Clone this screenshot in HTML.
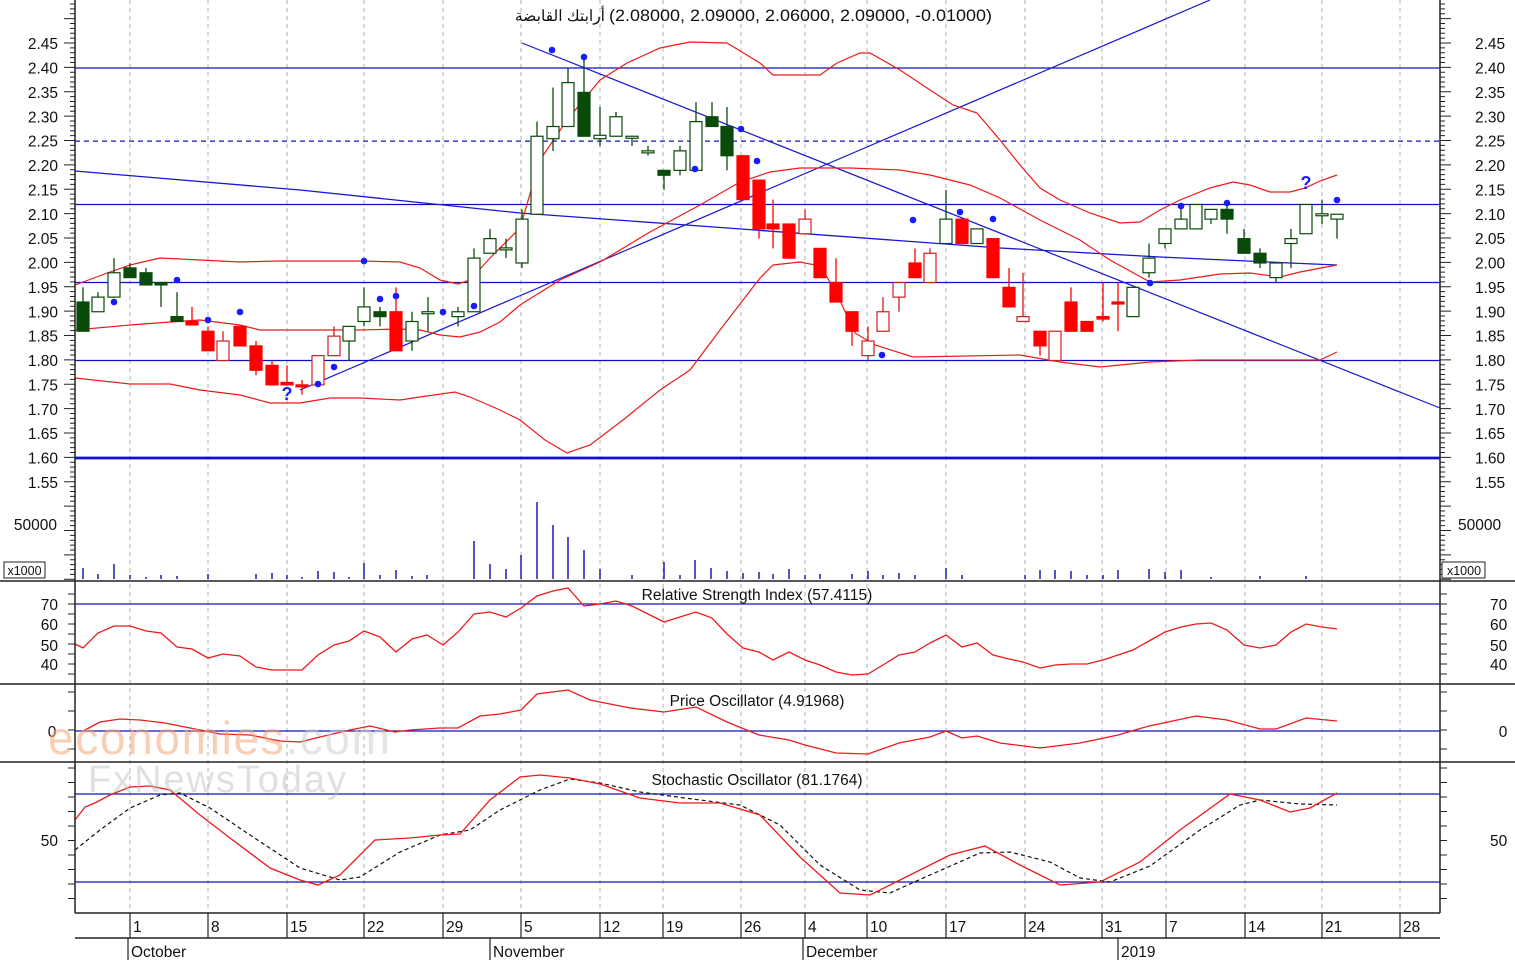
<!DOCTYPE html>
<html><head><meta charset="utf-8">
<style>
html,body{margin:0;padding:0;background:#fff;}
svg{display:block;font-family:"Liberation Sans","Noto Sans CJK SC",sans-serif;}
</style></head>
<body>
<svg id="c" xmlns="http://www.w3.org/2000/svg" width="1515" height="960" viewBox="0 0 1515 960">
<rect width="1515" height="960" fill="#fff"/>
<g id="g"></g>
<text x="605" y="21" text-anchor="end" font-size="15.5" fill="#111">أرابتك القابضة</text>
<text x="609" y="21" font-size="16.5" fill="#111" textLength="383" lengthAdjust="spacingAndGlyphs">(2.08000, 2.09000, 2.06000, 2.09000, -0.01000)</text>
<text x="757" y="600" text-anchor="middle" font-size="15.5" fill="#111">Relative Strength Index (57.4115)</text>
<text x="757" y="706" text-anchor="middle" font-size="15.5" fill="#111">Price Oscillator (4.91968)</text>
<text x="757" y="785" text-anchor="middle" font-size="15.5" fill="#111">Stochastic Oscillator (81.1764)</text>
<text x="48" y="754" font-size="46" fill="#f6a77a" opacity="0.55" textLength="342">economies<tspan fill="#cfcfcf">.com</tspan></text>
<text x="88" y="792" font-size="38" fill="#bbb" opacity="0.45" textLength="258">FxNewsToday</text>
</svg>
<script>
var g=document.getElementById('g'),s='';
function Y(p){return 68+(2.40-p)*487.5;}
function L(x1,y1,x2,y2,c,w,d){s+='<line x1="'+x1+'" y1="'+y1+'" x2="'+x2+'" y2="'+y2+'" stroke="'+c+'" stroke-width="'+(w||1)+'"'+(d?' stroke-dasharray="'+d+'"':'')+'/>';}
function P(pts,c,w,d){s+='<polyline fill="none" points="'+pts.map(function(p){return p.join(',')}).join(' ')+'" stroke="'+c+'" stroke-width="'+(w||1.3)+'"'+(d?' stroke-dasharray="'+d+'"':'')+'/>';}
function T(x,y,t,a,sz){s+='<text x="'+x+'" y="'+y+'" font-size="'+(sz||15.5)+'" fill="#111"'+(a?' text-anchor="'+a+'"':'')+'>'+t+'</text>';}
var gx=[130,208,287,364,443,521,600,663,741,805,867,946,1025,1102,1166,1245,1322,1400];
gx.forEach(function(x){L(x,0,x,913,'#b0b0b0',1,'4,4');});
[2.40,2.12,1.96,1.80].forEach(function(p){L(75,Y(p),1440,Y(p),'#1010c0',1.3);});
L(75,Y(2.25),1440,Y(2.25),'#1010c0',1.3,'5,4');
L(75,458,1440,458,'#1010d0',2.8);
P([[75,171],[300,190],[520,213],[700,226],[1000,248],[1160,257],[1290,263],[1337,265]],'#1818d0',1.3);
L(300,390,1210,0,'#1818d0',1.2);
L(522,43,1440,408,'#1818d0',1.2);
P([[75,285],[110,272],[130,265],[160,258],[200,260],[240,262],[280,261],[320,261],[360,261],[400,262],[420,268],[440,280],[458,284],[470,280],[490,258],[520,228],[540,160],[567,120],[600,80],[627,63],[660,48],[690,42],[727,43],[760,63],[773,75],[820,75],[837,63],[860,53],[870,53],[900,70],[930,90],[953,105],[977,113],[1000,140],[1020,165],[1040,188],[1060,200],[1090,213],[1120,223],[1140,222],[1160,210],[1180,200],[1210,188],[1233,182],[1250,185],[1270,192],[1290,192],[1305,188],[1320,181],[1337,175]],'#ee1a1a',1.2);
P([[75,330],[130,325],[170,322],[200,320],[240,325],[260,330],[320,330],[360,330],[400,329],[420,330],[440,335],[460,337],[480,332],[500,322],[520,305],[560,280],[600,262],[650,232],[700,205],[740,182],[770,172],[800,168],[850,168],[900,170],[930,175],[970,185],[1000,198],[1040,220],[1080,240],[1110,260],[1150,282],[1180,280],[1220,274],[1250,273],[1280,277],[1300,272],[1337,265]],'#ee1a1a',1.2);
P([[75,378],[130,384],[170,384],[200,390],[240,395],[270,403],[300,403],[330,398],[360,398],[400,400],[420,397],[455,392],[470,397],[500,410],[520,420],[545,440],[567,453],[590,445],[623,420],[660,390],[690,370],[720,330],[760,278],[773,265],[800,262],[820,266],[835,290],[855,333],[875,345],[913,357],[1020,355],[1060,362],[1100,367],[1150,362],[1200,360],[1320,360],[1337,352]],'#ee1a1a',1.2);
var C=[[83,1.92,1.86,1.95,1.86,'G'],[98,1.90,1.93,1.94,1.90,'g'],[114,1.93,1.98,2.01,1.93,'g'],[130,1.99,1.97,2.00,1.97,'G'],[146,1.98,1.955,1.99,1.955,'G'],[161,1.96,1.955,1.96,1.91,'G'],[177,1.89,1.88,1.94,1.88,'G'],[192,1.88,1.873,1.91,1.873,'r'],[208,1.86,1.82,1.87,1.82,'r'],[223,1.80,1.84,1.86,1.80,'R'],[240,1.87,1.83,1.87,1.83,'r'],[256,1.83,1.78,1.84,1.77,'r'],[272,1.79,1.75,1.80,1.75,'r'],[287,1.755,1.75,1.79,1.75,'r'],[302,1.75,1.749,1.76,1.73,'r'],[318,1.75,1.81,1.81,1.75,'R'],[334,1.81,1.85,1.87,1.81,'R'],[349,1.84,1.87,1.87,1.80,'g'],[364,1.88,1.91,1.95,1.87,'g'],[380,1.90,1.89,1.91,1.87,'G'],[396,1.90,1.82,1.95,1.82,'r'],[412,1.84,1.88,1.90,1.82,'g'],[428,1.90,1.899,1.93,1.86,'g'],[458,1.89,1.90,1.91,1.87,'g'],[474,1.90,2.01,2.03,1.90,'g'],[490,2.02,2.05,2.07,2.02,'g'],[506,2.03,2.031,2.05,2.01,'g'],[522,2.00,2.09,2.11,1.99,'g'],[537,2.10,2.26,2.29,2.10,'g'],[553,2.255,2.28,2.36,2.23,'g'],[568,2.28,2.37,2.40,2.28,'g'],[584,2.35,2.26,2.42,2.26,'G'],[600,2.255,2.262,2.32,2.24,'g'],[616,2.26,2.30,2.31,2.26,'g'],[632,2.26,2.259,2.26,2.24,'g'],[648,2.23,2.229,2.24,2.22,'g'],[664,2.19,2.18,2.19,2.15,'G'],[680,2.19,2.23,2.24,2.18,'g'],[696,2.19,2.29,2.33,2.19,'g'],[712,2.30,2.28,2.33,2.28,'G'],[727,2.28,2.22,2.32,2.19,'G'],[743,2.22,2.13,2.22,2.13,'r'],[759,2.17,2.07,2.17,2.05,'r'],[773,2.08,2.07,2.13,2.03,'r'],[789,2.08,2.01,2.08,2.01,'r'],[805,2.06,2.09,2.11,2.06,'R'],[820,2.03,1.97,2.03,1.97,'r'],[836,1.96,1.92,2.01,1.92,'r'],[852,1.90,1.86,1.90,1.83,'r'],[868,1.81,1.84,1.87,1.80,'R'],[883,1.86,1.90,1.93,1.86,'R'],[899,1.93,1.96,1.96,1.90,'R'],[915,2.00,1.97,2.03,1.97,'r'],[930,1.96,2.02,2.03,1.96,'R'],[946,2.04,2.09,2.15,2.04,'g'],[962,2.09,2.04,2.09,2.04,'r'],[977,2.04,2.07,2.07,2.04,'g'],[993,2.05,1.97,2.05,1.97,'r'],[1009,1.95,1.91,1.99,1.91,'r'],[1023,1.88,1.89,1.98,1.88,'R'],[1040,1.86,1.83,1.86,1.81,'r'],[1055,1.80,1.86,1.86,1.80,'R'],[1071,1.92,1.86,1.95,1.86,'r'],[1087,1.88,1.86,1.88,1.86,'r'],[1103,1.89,1.885,1.96,1.88,'r'],[1118,1.92,1.919,1.96,1.86,'r'],[1133,1.89,1.95,1.95,1.89,'g'],[1149,1.98,2.01,2.04,1.97,'g'],[1165,2.04,2.07,2.07,2.03,'g'],[1181,2.07,2.09,2.12,2.07,'g'],[1196,2.07,2.12,2.12,2.07,'g'],[1211,2.09,2.11,2.11,2.08,'g'],[1227,2.11,2.09,2.12,2.06,'G'],[1244,2.05,2.02,2.07,2.02,'G'],[1260,2.02,2.00,2.03,1.99,'G'],[1276,1.97,2.00,2.00,1.96,'g'],[1291,2.04,2.05,2.07,1.99,'g'],[1306,2.06,2.12,2.12,2.06,'g'],[1322,2.10,2.101,2.13,2.08,'g'],[1337,2.09,2.10,2.10,2.05,'g']];
C.forEach(function(c){var x=c[0],t=Y(Math.max(c[1],c[2])),b=Y(Math.min(c[1],c[2])),h=Y(c[3]),l=Y(c[4]);
var red=(c[5]=='r'||c[5]=='R'),sc=c[5]=='R'?'#cc2020':(red?'#ff0000':'#0a4a0a');
L(x,h,x,l,sc,1.3);
var fill=(c[5]=='g'||c[5]=='R')?'#fff':(c[5]=='G'?'#0a4a0a':'#ff0000');
var hh=Math.max(b-t,2);
s+='<rect x="'+(x-6)+'" y="'+t+'" width="12" height="'+hh+'" fill="'+fill+'" stroke="'+sc+'" stroke-width="1.2"/>';});
[[114,302],[177,280],[208,320],[240,312],[318,384],[334,367],[364,261],[380,299],[396,296],[443,312],[474,306],[552,50],[584,57],[695,169],[741,129],[757,161],[882,355],[913,220],[960,212],[993,219],[1150,283],[1181,206],[1227,203],[1337,200]].forEach(function(d){s+='<circle cx="'+d[0]+'" cy="'+d[1]+'" r="3.3" fill="#1a1aff"/>';});
s+='<text x="287" y="400" font-size="18" font-weight="bold" fill="#1a1aff" text-anchor="middle">?</text>';
s+='<text x="1306" y="189" font-size="18" font-weight="bold" fill="#1a1aff" text-anchor="middle">?</text>';
var V=[[83,568],[98,574],[114,564],[130,575],[146,577],[161,575],[177,576],[208,574],[256,574],[272,573],[287,575],[302,577],[318,571],[334,572],[349,577],[364,563],[380,575],[396,570],[412,576],[427,575],[474,541],[490,564],[506,569],[521,555],[537,502],[553,525],[568,537],[584,550],[600,569],[632,575],[664,562],[680,575],[695,560],[711,568],[727,571],[743,573],[759,572],[773,574],[789,569],[805,575],[820,574],[852,574],[868,571],[883,575],[899,573],[915,575],[946,568],[962,575],[1025,575],[1040,570],[1055,570],[1071,571],[1087,575],[1103,575],[1118,570],[1149,569],[1165,572],[1181,570],[1211,577],[1260,576],[1306,576]];
V.forEach(function(v){L(v[0],v[1],v[0],579,'#1a1ab0',1.5);});
L(75,604,1440,604,'#1010c0',1.3);
P([[75,644],[83,648],[98,633],[114,626],[130,626],[146,631],[161,633],[177,647],[192,649],[208,658],[223,654],[240,656],[256,667],[272,670],[302,670],[318,655],[334,645],[349,641],[364,631],[380,637],[396,652],[412,639],[427,635],[443,645],[458,632],[474,614],[490,612],[506,617],[521,608],[537,596],[553,591],[568,588],[584,606],[600,604],[616,601],[632,606],[648,614],[664,622],[680,617],[696,612],[712,618],[727,634],[743,648],[759,652],[773,660],[789,652],[805,660],[820,665],[836,672],[852,675],[868,674],[883,665],[899,655],[915,652],[930,643],[946,635],[962,647],[977,643],[993,655],[1009,659],[1023,662],[1040,668],[1055,665],[1071,664],[1087,664],[1103,660],[1118,655],[1133,650],[1149,641],[1165,632],[1181,627],[1196,624],[1211,623],[1227,630],[1244,645],[1260,648],[1276,645],[1291,632],[1306,624],[1322,627],[1337,629]],'#ee1a1a',1.3);
L(75,731,1440,731,'#1010c0',1.3);
P([[83,731],[100,722],[120,719],[140,720],[165,723],[195,729],[220,734],[250,735],[280,741],[300,742],[320,737],[350,730],[370,726],[395,732],[410,730],[440,728],[458,728],[480,716],[500,714],[521,710],[537,694],[568,690],[590,700],[630,708],[664,712],[696,707],[727,722],[759,735],[789,740],[805,745],[836,753],[868,754],[899,743],[930,737],[946,731],[962,738],[977,736],[1000,743],[1040,748],[1080,743],[1118,735],[1149,726],[1196,716],[1227,720],[1260,729],[1276,729],[1306,718],[1337,721]],'#ee1a1a',1.3);
L(75,794,1440,794,'#1010c0',1.3);L(75,882,1440,882,'#1010c0',1.3);
P([[75,850],[100,830],[130,808],[160,795],[180,793],[210,808],[250,835],[300,868],[340,880],[360,877],[400,852],[440,835],[470,830],[500,810],[540,790],[570,779],[600,783],[640,792],[700,800],[740,805],[780,825],[820,865],[860,890],[890,893],[930,875],[980,853],[1010,852],[1050,862],[1080,878],[1110,882],[1150,866],[1200,830],[1240,805],[1260,800],[1300,804],[1337,805]],'#111',1.2,'4,3');
P([[75,820],[85,807],[95,803],[110,795],[130,787],[150,786],[170,790],[200,815],[230,838],[270,868],[300,880],[318,885],[340,875],[375,840],[410,838],[440,835],[460,834],[490,800],[520,777],[540,775],[570,778],[600,784],[640,798],[680,803],[720,803],[760,815],[800,857],[840,893],[870,895],[900,880],[950,855],[985,846],[1020,865],[1060,885],[1100,882],[1140,862],[1180,830],[1230,794],[1260,800],[1290,812],[1310,808],[1337,793]],'#ee1a1a',1.3);
L(75,0,75,913,'#222',1.5);L(1440,0,1440,913,'#222',1.5);
[581,684,762].forEach(function(y){L(0,y,1515,y,'#222',1.5);});
L(75,913,1440,913,'#222',1.5);
for(var y=4;y<580;y+=4.875){var mj=(Math.round((y-68)/4.875)%5==0);L(mj?64:70,y,75,y,'#222',1);L(1440,y,mj?1451:1445,y,'#222',1);}
for(var y=594;y<684;y+=10){L(68,y,75,y,'#222',1);L(1440,y,1447,y,'#222',1);}
for(var y=692;y<762;y+=19){L(68,y,75,y,'#222',1);L(1440,y,1447,y,'#222',1);}
for(var y=768;y<913;y+=14.5){L(68,y,75,y,'#222',1);L(1440,y,1447,y,'#222',1);}
for(var p=2.45;p>1.54;p-=0.05){var yy=Y(p)+5.5;T(58,yy,p.toFixed(2),'end');T(1475,yy,p.toFixed(2));}
T(57,530,'50000','end');T(1458,530,'50000');
s+='<rect x="4" y="562" width="41" height="16" fill="#fff" stroke="#222"/>';T(24.5,575,'x1000','middle',12.5);
s+='<rect x="1442" y="562" width="43" height="16" fill="#fff" stroke="#222"/>';T(1464,575,'x1000','middle',12.5);
[[70,610],[60,630],[50,651],[40,670]].forEach(function(r){T(58,r[1],r[0],'end');T(1490,r[1],r[0]);});
T(1503,737,'0','middle');T(52,737,'0','middle');
T(58,846,'50','end');T(1490,846,'50');
L(75,938,1440,938,'#222',1.5);
var dl=['1','8','15','22','29','5','12','19','26','4','10','17','24','31','7','14','21','28'];
gx.forEach(function(x,i){L(x,913,x,938,'#222',1.2);T(x+3,932,dl[i]);});
[[128,'October'],[490,'November'],[803,'December'],[1118,'2019']].forEach(function(m){L(m[0],938,m[0],960,'#222',1.2);T(m[0]+3,957,m[1]);});
g.innerHTML=s;
</script>
</body></html>
